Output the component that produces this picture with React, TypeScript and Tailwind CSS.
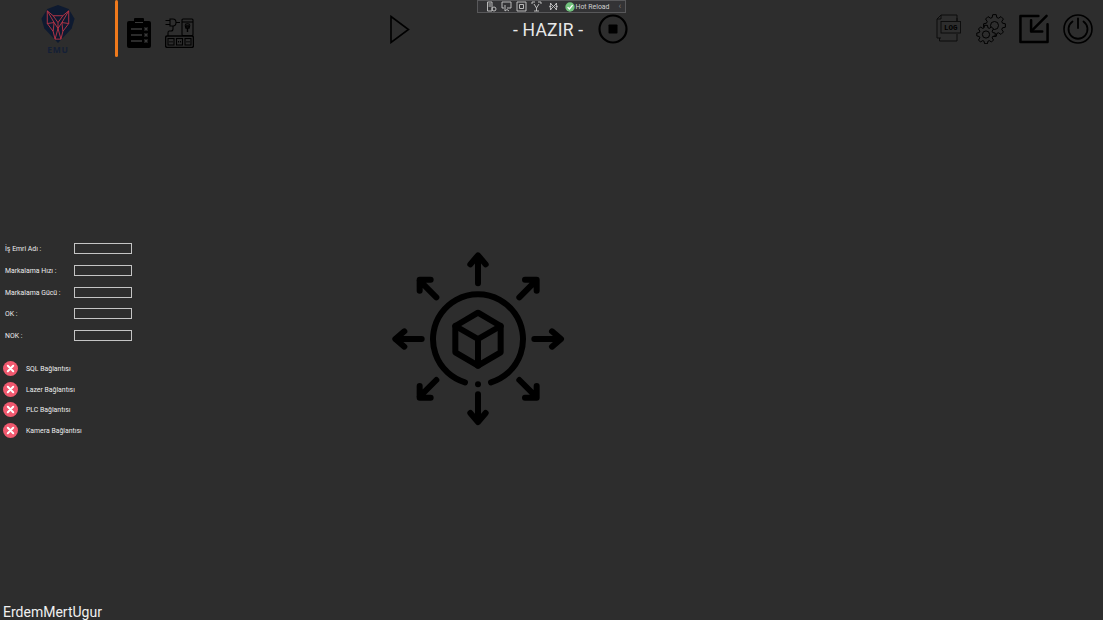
import React from "react";

const gear = (cx: number, cy: number, ro: number, ri: number, n: number) => {
  const pts: string[] = [];
  for (let i = 0; i < n; i++) {
    const a = (i / n) * Math.PI * 2;
    const w = (Math.PI * 2) / n;
    const p = (r: number, t: number) => `${(cx + r * Math.cos(t)).toFixed(2)} ${(cy + r * Math.sin(t)).toFixed(2)}`;
    pts.push(p(ri, a - w * 0.36), p(ro, a - w * 0.2), p(ro, a + w * 0.2), p(ri, a + w * 0.36));
  }
  return "M" + pts.join("L") + "Z";
};

function Logo() {
  return (
    <div className="flex h-[50px] w-[36px] flex-col items-center">
      <svg viewBox="0 0 36 40" className="h-[39px] w-[36px] shrink-0">
        <path d="M18 0 L29 4 L35 14 L32 24 L18 39 L4 24 L1 14 L7 4 Z" fill="#0e1a30" />
        <g fill="none" stroke="#c23648" strokeWidth="0.9" strokeLinejoin="round">
          <path d="M7 6 L13 11 L23 11 L29 6 L29 19 L23 27 L21 35 L15 35 L13 27 L7 19 Z" />
          <path d="M13 11 L18 18 L23 11 M7 19 L14 18 L18 24 L22 18 L29 19 M14 18 L13 27 M22 18 L23 27 M18 18 L18 24 L15 35 M18 24 L21 35 M7 6 L14 18 M29 6 L22 18" />
        </g>
      </svg>
      <span className="mt-[1px] text-[8.5px] leading-[10px] font-bold tracking-[0.8px] text-[#141f36] [font-family:'Open_Sans',sans-serif]">EMU</span>
    </div>
  );
}

function Clipboard() {
  return (
    <svg viewBox="0 0 24 30" className="h-[30px] w-[24px]">
      <path d="M2 3 H7 V1 Q7 0 8 0 H16 Q17 0 17 1 V3 H22 Q24 3 24 5 V28 Q24 30 22 30 H2 Q0 30 0 28 V5 Q0 3 2 3 Z" fill="#000" />
      <path d="M8 4.5 H16" stroke="#3a3a3a" strokeWidth="1" />
      <g stroke="#3a3a3a" strokeWidth="1.3">
        <path d="M4 11 H15 M4 17 H15 M4 23 H15" />
        <path d="M17.5 9.5 L20.5 12.5 M20.5 9.5 L17.5 12.5 M17.5 15.5 L20.5 18.5 M20.5 15.5 L17.5 18.5 M17.5 21.5 L20.5 24.5 M20.5 21.5 L17.5 24.5" />
      </g>
    </svg>
  );
}

function PlugBoard() {
  return (
    <svg viewBox="0 0 29 30" className="h-[30px] w-[29px]" fill="none" stroke="#000" strokeWidth="1.1">
      <rect x="17" y="1" width="11" height="16.5" rx="1" />
      <path d="M17 4 H28" />
      <path d="M20.5 8 H24.5 L24 10 H21 Z M22.5 10 V14" strokeWidth="1.4" />
      <path d="M20 6.5 Q22.5 5 25 6.5" />
      <path d="M0.5 2.5 H5 M0.5 6.5 H5 M5 1 H8 Q11 1 11 4.5 Q11 8 8 8 H5 Z M11 4.5 H15" />
      <path d="M8 8 V11 Q8 13 6 13 H4 Q3 13 3 15 V18" />
      <rect x="0.6" y="18" width="27.8" height="11.4" rx="1.6" strokeWidth="1.4" />
      <rect x="3" y="20.5" width="6" height="6.5" />
      <rect x="11.5" y="20.5" width="6" height="6.5" />
      <rect x="20" y="20.5" width="6" height="6.5" />
      <path d="M5 23 V24.5 M7 23 V24.5 M13.5 23 V24.5 M15.5 23 V24.5 M22 23 V24.5 M24 23 V24.5" />
    </svg>
  );
}

function ToolIcon({ d }: { d: string }) {
  return (
    <svg viewBox="0 0 11 11" className="h-[11px] w-[11px] shrink-0" fill="none" stroke="#c8c8c8" strokeWidth="0.9">
      <path d={d} />
    </svg>
  );
}

function HotReloadBar() {
  return (
    <div className="absolute left-[477px] top-0 flex h-[13px] w-[149px] items-center border border-[#58585a] bg-[#333335] pl-[8px]">
      <div className="flex shrink-0 items-center gap-[4px]">
        <ToolIcon d="M1.5 1 H6 V10 H1.5 Z M2.5 3 H5 M2.5 5 H5 M8 6 A2 2 0 1 0 8 10 A2 2 0 1 0 8 6" />
        <ToolIcon d="M1 1 H10 V7 H6 M1 1 V7 H3 M4 4 L4 10 L6 8.5 L8 10" />
        <ToolIcon d="M1 1 H10 V10 H1 Z M3.5 3.5 H7.5 V7.5 H3.5 Z" />
        <ToolIcon d="M1 1 H4 M7 1 H10 V3 M1 1 V3 M3 3 L5.5 7 L8 3 M5.5 7 V10 M3 10 H8" />
      </div>
      <div className="ml-[6px] flex shrink-0 items-center">
        <ToolIcon d="M2 2 L9 9 M9 2 L2 9 M1.5 5.5 H3.5 M7.5 5.5 H9.5 M3 2 Q1 5.5 3 9 M8 2 Q10 5.5 8 9" />
      </div>
      <svg viewBox="0 0 10 10" className="ml-[6px] h-[10px] w-[10px] shrink-0">
        <circle cx="5" cy="5" r="4.7" fill="#72c27d" />
        <path d="M2.6 5.1 L4.4 7 L7.6 3.2" fill="none" stroke="#fff" strokeWidth="1.3" />
      </svg>
      <span className="ml-[0.5px] w-[34px] shrink-0 pt-[1px] text-[6.9px] leading-[11px] whitespace-nowrap text-[#d0d0d0] [font-family:Roboto,sans-serif]">Hot Reload</span>
      <span className="ml-[9px] shrink-0 text-[9px] leading-[11px] text-[#777] [font-family:Roboto,sans-serif]">‹</span>
    </div>
  );
}

function Header() {
  return (
    <header className="flex h-[58px] shrink-0 items-start">
      <div className="ml-[40px] mt-[5px]"><Logo /></div>
      <div className="ml-[39px] h-[57px] w-[3px] rounded-full bg-[#f07a1c]" />
      <div className="ml-[9px] mt-[18px]"><Clipboard /></div>
      <div className="ml-[14px] mt-[18px]"><PlugBoard /></div>
      <svg viewBox="0 0 20 29" className="ml-[196px] mt-[15px] h-[29px] w-[20px]" fill="none" stroke="#000" strokeWidth="1.6">
        <path d="M1 1.5 L18.5 14.5 L1 27.5 Z" strokeLinejoin="miter" />
      </svg>
      <span className="ml-[103px] mt-[18px] w-[72px] text-[17.5px] leading-[24px] tracking-[0.2px] whitespace-nowrap text-[#e8e8e8] [font-family:Roboto,sans-serif]">- HAZIR -</span>
      <svg viewBox="0 0 30 30" className="ml-[13px] mt-[14px] h-[30px] w-[30px]" fill="none">
        <circle cx="15" cy="15" r="13.5" stroke="#000" strokeWidth="2.2" />
        <rect x="10.5" y="10.5" width="9" height="9" rx="0.8" fill="#000" />
      </svg>
      <svg viewBox="0 0 25 29" className="ml-[308px] mt-[14px] h-[29px] w-[25px]" fill="none" stroke="#0a0a0a" strokeWidth="0.9">
        <path d="M21 7 V1 H5 L1 5 V24 H5 M5 1 V5 H1" />
        <path d="M3.5 24 V27 H21 V20 M21 7 V4" />
        <rect x="5" y="7.5" width="19.5" height="11.5" strokeWidth="0.9" />
        <text x="14.8" y="15.8" textAnchor="middle" fontSize="7.5" fontFamily="Liberation Mono, monospace" fontWeight="700" fill="#000" stroke="none">LOG</text>
      </svg>
      <svg viewBox="0 0 30 30" className="ml-[15px] mt-[14px] h-[30px] w-[30px]" fill="none" stroke="#000" strokeWidth="1" strokeLinejoin="round">
        <path d={gear(18.5, 11.5, 11, 8.3, 8)} />
        <circle cx="18.5" cy="11.5" r="4" />
        <path d={gear(10, 20.5, 9.3, 7, 8)} fill="#2d2d2d" />
        <circle cx="10" cy="20.5" r="3.6" />
      </svg>
      <svg viewBox="0 0 31 30" className="ml-[13px] mt-[14px] h-[30px] w-[30px]" fill="none" stroke="#000" strokeWidth="2.6" strokeLinecap="round" strokeLinejoin="round">
        <path d="M20 1.5 H1.5 V28.5 H29.5 V10" />
        <path d="M28.5 1.5 L13 17" />
        <path d="M12.5 6 V17.5 H24" />
      </svg>
      <svg viewBox="0 0 30 30" className="ml-[14px] mt-[14px] h-[30px] w-[30px]" fill="none" stroke="#000" strokeLinecap="round">
        <circle cx="15" cy="15" r="14" strokeWidth="1.6" />
        <path d="M9.5 7.5 A9.5 9.5 0 1 0 20.5 7.5" strokeWidth="1.8" />
        <path d="M15 4.5 V14" strokeWidth="1.8" />
      </svg>
    </header>
  );
}

const fields = ["İş Emri Adı :", "Markalama Hızı :", "Markalama Gücü :", "OK :", "NOK :"];
const statuses = ["SQL Bağlantısı", "Lazer Bağlantısı", "PLC Bağlantısı", "Kamera Bağlantısı"];

function LeftPanel() {
  return (
    <aside className="flex w-[385px] shrink-0 flex-col pt-[185px] text-[#ececec] [font-family:Roboto,sans-serif]">
      <div className="flex flex-col gap-[10.75px]">
        {fields.map((f) => (
          <div key={f} className="flex h-[11px] items-center">
            <span className="w-[74px] pl-[5px] pt-[2px] text-[6.9px] leading-[11px] whitespace-nowrap">{f}</span>
            <div className="h-[11px] w-[58px] border border-[#c4c4c4]" />
          </div>
        ))}
      </div>
      <div className="mt-[20px] flex flex-col gap-[5.7px]">
        {statuses.map((s) => (
          <div key={s} className="flex h-[15px] items-center">
            <svg viewBox="0 0 15 15" className="ml-[2.5px] h-[15px] w-[15px] shrink-0">
              <circle cx="7.5" cy="7.5" r="7.5" fill="#f1596f" />
              <path d="M4.8 4.8 L10.2 10.2 M10.2 4.8 L4.8 10.2" stroke="#fff" strokeWidth="2" strokeLinecap="round" />
            </svg>
            <span className="ml-[8.5px] pt-[2px] text-[6.9px] leading-[11px] whitespace-nowrap">{s}</span>
          </div>
        ))}
      </div>
    </aside>
  );
}

function Distribution() {
  return (
    <svg viewBox="0 0 570 570" className="mt-[187px] h-[190px] w-[190px]" fill="none" stroke="#000" strokeWidth="18" strokeLinecap="round" strokeLinejoin="round">
      <path d="M240 412 A135 135 0 1 1 318 412" />
      <circle cx="279" cy="418" r="9" fill="#000" stroke="none" />
      <path d="M279 203 L347 243 V322 L279 362 L211 322 V243 Z" />
      <path d="M211 243 L279 282 L347 243 M279 282 V362" />
      <path d="M279 115 V35 M256 58 L279 31 L302 58" />
      <path d="M279 448 V528 M256 504 L279 531 L302 504" />
      <path d="M110 282 H34 M58 259 L31 282 L58 305" />
      <path d="M448 282 H525 M501 259 L528 282 L501 305" />
      <path d="M154 157 L104 107 M104 137 V104 H137" />
      <path d="M403 157 L453 107 M420 104 H455 V137" />
      <path d="M154 405 L104 455 M104 423 V458 H137" />
      <path d="M403 405 L453 455 M455 423 V458 H420" />
    </svg>
  );
}

export default function App() {
  return (
    <div className="relative flex h-[620px] w-[1103px] flex-col overflow-hidden bg-[#2d2d2d]">
      <Header />
      <main className="flex min-h-0 flex-1">
        <LeftPanel />
        <Distribution />
      </main>
      <footer className="h-[17px] shrink-0 pl-[3px] text-[14px] leading-[19px] text-[#f0f0f0] [font-family:Roboto,sans-serif]">ErdemMertUgur</footer>
      <HotReloadBar />
    </div>
  );
}
